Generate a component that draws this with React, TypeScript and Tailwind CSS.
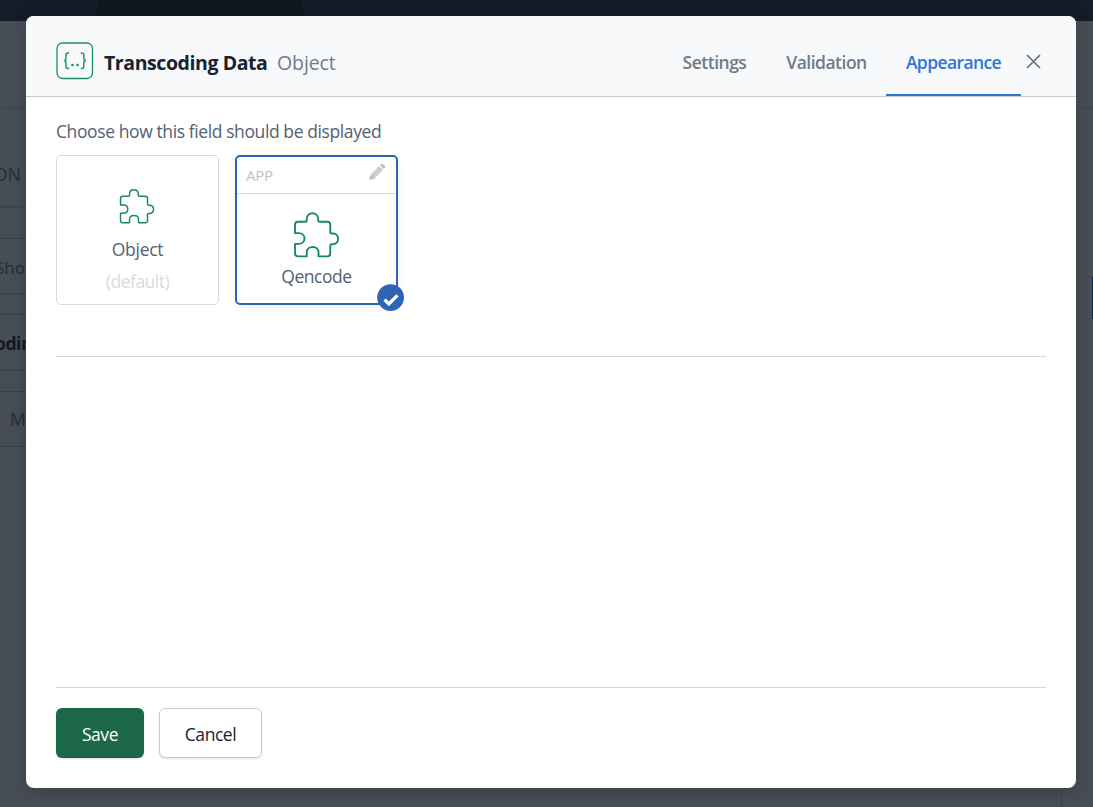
import React from "react";

function Puzzle({ className }: { className: string }) {
  return (
    <svg viewBox="0 0 140 140" className={className} fill="none" stroke="#178a5c" strokeWidth="5.6" strokeLinejoin="round">
      <path d="M6 66V41Q6 32 15 32H37Q41 32 41 28V24C41 1 75 1 75 24V28Q75 32 79 32H102Q111 32 111 41V63Q111 67 115 67H118C140 67 140 99 118 99H115Q111 99 111 103V126Q111 135 102 135H76V123C76 102 41 102 41 123V135H15Q6 135 6 126V98H17C40 98 40 66 17 66Z" />
    </svg>
  );
}

function Backdrop() {
  return (
    <div className="flex h-[807px] w-[1093px] flex-col overflow-hidden bg-[#474d54] text-[18px] text-[#20262f]">
      <div className="flex h-[21px] shrink-0 bg-[#141c27]">
        <div className="ml-[97px] w-[206px] bg-[#0f1721]" />
      </div>
      <div className="flex flex-1 justify-between">
        <div className="flex w-[26px] flex-col overflow-hidden whitespace-nowrap">
          <div className="h-[87px] shrink-0 border-b border-[#3c4249]" />
          <div className="flex h-[100px] shrink-0 items-center justify-end border-b-2 border-[#3e444c] pt-[34px] pr-[5px] font-medium text-[#272e38]">ON</div>
          <div className="h-[30px] shrink-0" />
          <div className="flex h-[56px] shrink-0 items-center justify-end border-y border-[#383f48] pt-[4px] pr-[1px] text-[17px] text-[#252c36]">Sho</div>
          <div className="h-[20px] shrink-0" />
          <div className="flex h-[57px] shrink-0 items-center border-y border-[#383f48] pt-[2px] text-[17.5px] font-bold text-[#111923]">
            <span className="-ml-[5px] tracking-[-0.4px]">oding</span>
          </div>
          <div className="h-[20px] shrink-0" />
          <div className="flex h-[56px] shrink-0 items-center border-y border-[#383f48] pl-[10px] text-[17.5px] text-[#252c36]">M</div>
        </div>
        <div className="flex w-[32px] flex-col">
          <div className="h-[87px] border-b border-[#3c4249]" />
          <div className="mt-[169px] ml-auto h-[42px] w-px bg-[#08294a]" />
          <div className="mt-auto h-[30px] border-l border-[#3c4249]" />
        </div>
      </div>
    </div>
  );
}

export default function App() {
  return (
    <div className="relative h-[807px] w-[1093px] overflow-hidden font-['Open_Sans','Noto_Sans',sans-serif]">
      <Backdrop />
      <div role="dialog" className="absolute top-[16px] left-[26px] flex h-[772px] w-[1050px] flex-col overflow-hidden rounded-[8px] bg-white shadow-[0_4px_16px_rgba(20,35,40,0.25)]">
        <header className="flex h-[81px] shrink-0 items-stretch border-b border-[#becdd7] bg-[#f7f9fb] pl-[30px]">
          <div className="flex items-center pt-[9px]">
            <svg viewBox="0 0 38 38" className="h-[38px] w-[38px]" fill="none" stroke="#1a8f60" strokeWidth="1.3">
              <rect x="1" y="1" width="35.5" height="35.5" rx="5.5" />
              <path strokeWidth="1.4" d="M13 11h-.8Q10 11 10 13v3Q10 18.6 7.8 18.6Q10 18.6 10 21v3.5Q10 26.5 12.2 26.5H13M24.8 11h.8Q27.8 11 27.8 13v3Q27.8 18.6 30 18.6Q27.8 18.6 27.8 21v3.5Q27.8 26.5 25.6 26.5h-.8" />
              <circle cx="16.4" cy="23" r="1.3" fill="#1a8f60" stroke="none" />
              <circle cx="21.5" cy="23" r="1.3" fill="#1a8f60" stroke="none" />
            </svg>
            <h1 className="ml-[10px] w-[173px] pt-[5px] text-[19.5px] font-bold tracking-[-0.42px] whitespace-nowrap text-[#182230]">Transcoding Data</h1>
            <span className="pt-[5px] text-[19.5px] tracking-[-0.1px] whitespace-nowrap text-[#72798b]">Object</span>
          </div>
          <nav className="ml-auto flex text-[17.5px] font-semibold tracking-[-0.5px] text-[#6f7b88]">
            <div className="flex w-[105px] items-center justify-center pt-[12px]">Settings</div>
            <div className="flex w-[119px] items-center justify-center pt-[12px]">Validation</div>
            <div className="flex w-[135px] items-center justify-center border-b-2 border-[#2e75d4] pt-[14px] tracking-[-0.6px] text-[#2e75d4]">Appearance</div>
          </nav>
          <button aria-label="Close" className="mr-[35px] ml-[5px] flex w-[15px] items-center pt-[10px]">
            <svg viewBox="0 0 15 15" className="h-[15px] w-[15px]" stroke="#667084" strokeWidth="1.7"><path d="M1 1L14 14M14 1L1 14" /></svg>
          </button>
        </header>
        <main className="flex flex-1 flex-col px-[30px] pt-[21px]">
          <p className="h-[26px] text-[17.5px] leading-[26px] tracking-[-0.4px] whitespace-nowrap text-[#536171]">Choose how this field should be displayed</p>
          <div className="mt-[11px] flex gap-4">
            <div className="flex h-[150px] w-[163px] flex-col items-center rounded-[5px] border border-[#d3dce2] pt-[32px]">
              <Puzzle className="mr-[1px] h-[36px] w-[36px]" />
              <span className="mt-[12px] text-[17.5px] leading-[26px] tracking-[-0.3px] text-[#536171]">Object</span>
              <span className="mt-[6px] text-[17.5px] leading-[26px] tracking-[-0.5px] text-[#d5dce1]">(default)</span>
            </div>
            <div className="relative flex h-[150px] w-[163px] flex-col items-center rounded-[5px] border-2 border-[#2d64b3] shadow-[0_4px_8px_rgba(0,0,0,0.05)]">
              <div className="flex h-[37px] w-full shrink-0 items-center border-b border-[#d3dfe8] pr-[10px] pl-[9px] text-[15px] tracking-[-0.2px] text-[#b7c3ca]">
                <span className="pt-[1px]">APP</span>
                <svg viewBox="0 0 18 18" className="mb-[6px] ml-auto h-[18px] w-[18px]" fill="#b7c3ca">
                  <path d="M1 17l1.4-5.1L11 3.3l3.8 3.8-8.7 8.6zM12 2.3l1.4-1.3q.8-.7 1.6 0l2.1 2.1q.8.8 0 1.6l-1.4 1.4z" />
                  <path d="M3.8 12.3L11.4 4.7M5.8 14.1l7.6-7.6" stroke="white" strokeWidth=".7" />
                </svg>
              </div>
              <Puzzle className="mt-[17px] mr-[1px] h-[47px] w-[47px] shrink-0" />
              <span className="mt-[5px] text-[17.5px] leading-[26px] tracking-[-0.45px] text-[#536171]">Qencode</span>
              <svg viewBox="0 0 28 28" className="absolute -right-[9px] -bottom-[9px] h-[28px] w-[28px]">
                <circle cx="13.6" cy="13.6" r="13.4" fill="#2d64b3" />
                <path d="M7.6 15.6l4.3 4.3 8.5-8.5" fill="none" stroke="white" strokeWidth="3.4" />
              </svg>
            </div>
          </div>
          <div className="mt-[51px] h-px bg-[#d1dadf]" />
        </main>
        <footer className="mx-[30px] flex h-[101px] shrink-0 gap-[15px] border-t border-[#d1dadf] pt-[20px] text-[17.5px] tracking-[-0.45px]">
          <button className="h-[50px] w-[88px] rounded-[6px] bg-[#1c6748] pt-[3px] text-white shadow-[0_1px_2px_rgba(0,0,0,0.15)]">Save</button>
          <button className="h-[50px] w-[103px] rounded-[6px] border border-[#c5cdd5] bg-white pt-[3px] text-[#182230] shadow-[0_1px_2px_rgba(0,0,0,0.12)]">Cancel</button>
        </footer>
      </div>
    </div>
  );
}
